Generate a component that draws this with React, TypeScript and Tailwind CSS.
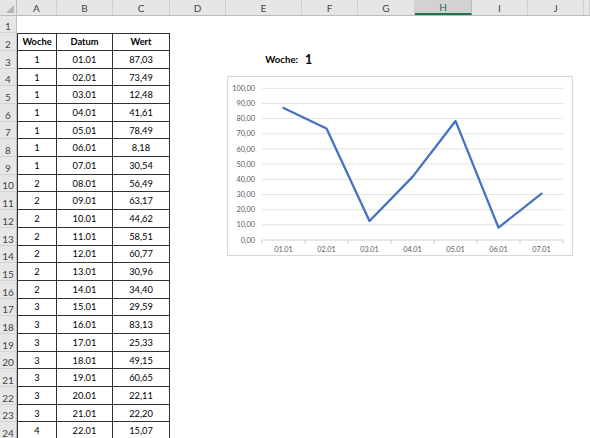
import React from "react";

const GRID = "grid grid-cols-[17px_40px_56px_57px_56px_76px_56px_57px_57px_56px_56px_1fr]";

const letters = ["A", "B", "C", "D", "E", "F", "G", "H", "I", "J", ""];

const data: [string, string, string][] = [
  ["1", "01.01", "87,03"],
  ["1", "02.01", "73,49"],
  ["1", "03.01", "12,48"],
  ["1", "04.01", "41,61"],
  ["1", "05.01", "78,49"],
  ["1", "06.01", "8,18"],
  ["1", "07.01", "30,54"],
  ["2", "08.01", "56,49"],
  ["2", "09.01", "63,17"],
  ["2", "10.01", "44,62"],
  ["2", "11.01", "58,51"],
  ["2", "12.01", "60,77"],
  ["2", "13.01", "30,96"],
  ["2", "14.01", "34,40"],
  ["3", "15.01", "29,59"],
  ["3", "16.01", "83,13"],
  ["3", "17.01", "25,33"],
  ["3", "18.01", "49,15"],
  ["3", "19.01", "60,65"],
  ["3", "20.01", "22,11"],
  ["3", "21.01", "22,20"],
  ["4", "22.01", "15,07"],
];

const week = [87.03, 73.49, 12.48, 41.61, 78.49, 8.18, 30.54];
const days = ["01.01", "02.01", "03.01", "04.01", "05.01", "06.01", "07.01"];

function RowHead({ n }: { n: number }) {
  return (
    <div className="flex items-end justify-center pb-[1px] bg-[#e6e6e6] border-r border-r-[#bcbcbc] border-b border-b-[#d4d4d4] text-[10px] leading-none text-[#444]">
      {n}
    </div>
  );
}

function Chart() {
  const left = 35;
  const step = 43;
  const y = (v: number) => 164 - v * 1.517;
  const pts = week.map((v, i) => `${left + step / 2 + i * step},${y(v)}`).join(" ");
  const font = "Lato, 'Liberation Sans', sans-serif";
  return (
    <div className="absolute left-[227px] top-[76px] w-[346px] h-[180px] bg-white">
      <svg width="346" height="180" viewBox="0 0 346 180">
        <rect x="0.5" y="0.5" width="345" height="179" fill="white" stroke="#d9d9d9" />
        {[0, 10, 20, 30, 40, 50, 60, 70, 80, 90, 100].map((v) => (
          <g key={v}>
            {v > 0 && <line x1={left} x2={left + 7 * step} y1={y(v)} y2={y(v)} stroke="#e3e3e3" strokeWidth="1" />}
            <text x="28" y={y(v) + 2.6} textAnchor="end" fontSize="7.3" fill="#595959" fontFamily={font}>
              {v.toFixed(2).replace(".", ",")}
            </text>
          </g>
        ))}
        <line x1={left} x2={left + 7 * step} y1={164} y2={164} stroke="#d0d0d0" strokeWidth="1" />
        {Array.from({ length: 8 }).map((_, i) => (
          <line key={i} x1={left + i * step} x2={left + i * step} y1={164} y2={168} stroke="#d0d0d0" strokeWidth="1" />
        ))}
        {days.map((d, i) => (
          <text key={d} x={left + step / 2 + i * step} y={176} textAnchor="middle" fontSize="7.3" fill="#595959" fontFamily={font}>
            {d}
          </text>
        ))}
        <polyline points={pts} fill="none" stroke="#4472c4" strokeWidth="2.3" strokeLinejoin="round" strokeLinecap="round" />
      </svg>
    </div>
  );
}

export default function App() {
  return (
    <div className="relative w-[590px] h-[438px] overflow-hidden bg-white font-['Lato','Liberation_Sans',sans-serif] text-black">
      {/* column header */}
      <div className={`${GRID} h-[16px] bg-[#e6e6e6] border-b border-b-[#bcbcbc]`}>
        <div className="relative border-r border-r-[#bcbcbc]">
          <div className="absolute right-[2px] bottom-[2px] w-0 h-0 border-l-[8px] border-l-transparent border-b-[8px] border-b-[#b4b4b4]" />
        </div>
        {letters.map((l, i) => (
          <div
            key={i}
            className={
              l === "H"
                ? "flex items-center justify-center bg-[#d2d2d2] border-r border-r-[#bcbcbc] border-b-2 border-b-[#217346] text-[10px] leading-none text-[#217346]"
                : "flex items-center justify-center border-r border-r-[#d0d0d0] text-[10px] leading-none text-[#444]"
            }
          >
            {l}
          </div>
        ))}
      </div>

      {/* row 1 */}
      <div className={`${GRID} h-[17.3px]`}>
        <RowHead n={1} />
      </div>

      {/* row 2: table header */}
      <div className={`${GRID} h-[17.7px]`}>
        <RowHead n={2} />
        {["Woche", "Datum", "Wert"].map((t, i) => (
          <div
            key={t}
            className={`flex items-center justify-center border-t border-r border-b border-[#333] text-[9.3px] font-bold ${i === 0 ? "border-l" : ""}`}
          >
            {t}
          </div>
        ))}
      </div>

      {data.map((r, idx) => (
        <div key={idx} className={`${GRID} h-[17.7px]`}>
          <RowHead n={idx + 3} />
          {r.map((t, i) => (
            <div
              key={i}
              className={`flex items-center justify-center pt-[1px] border-r border-b border-[#333] text-[9.3px] ${i === 0 ? "border-l" : ""}`}
            >
              {t}
            </div>
          ))}
          {idx === 0 && (
            <>
              <div />
              <div className="flex items-center justify-end pr-[4px] pt-[1px] text-[9.6px] font-bold">Woche:</div>
              <div className="flex items-center pl-[3px] text-[12.5px] font-bold leading-none">1</div>
            </>
          )}
        </div>
      ))}

      <Chart />
    </div>
  );
}
